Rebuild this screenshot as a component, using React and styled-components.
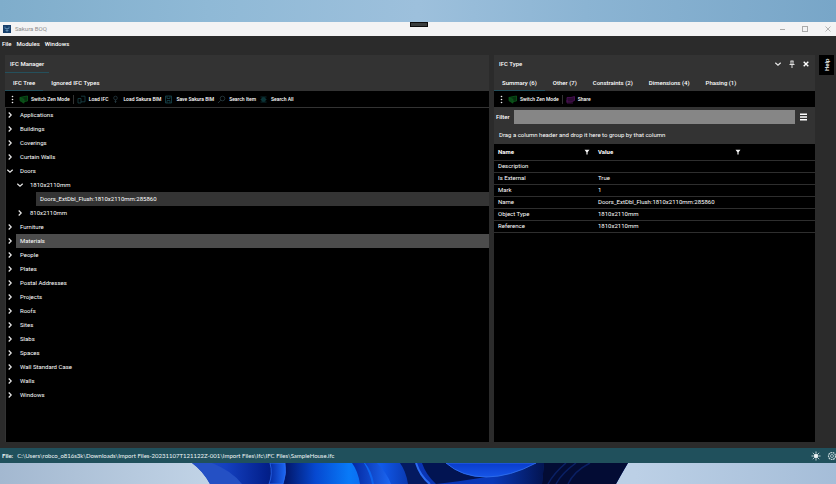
import React, { useState } from "react";
import styled, { createGlobalStyle, css } from "styled-components";

const GlobalStyle = createGlobalStyle`
  * {
    box-sizing: border-box;
  }

  body {
    margin: 0;
    background: #2b2b2b;
  }

  button, input, a {
    font: inherit;
    color: inherit;
  }

  button {
    margin: 0;
    padding: 0;
    border: 0;
    background: none;
  }
`;

const Desktop = styled.div`
  display: flex;
  flex-direction: column;
  min-height: 100vh;
  font-family: Roboto, "Open Sans", sans-serif;
  font-size: 6px;
  line-height: 8px;
  color: #fff;
  overflow: hidden;
`;

const Sky = styled.div`
  height: 22px;
  background: linear-gradient(90deg, #7fadcb 0%, #8fb9d6 25%, #9dc0dc 50%, #8bb4d3 70%, #78a6c8 100%);
`;

const TitleBar = styled.header`
  position: relative;
  display: flex;
  align-items: center;
  gap: 4px;
  height: 14px;
  padding: 0 4px 0 3px;
  background: #f3f3f4;
  color: #8c8c8c;

  h1 {
    flex: 1;
    margin: 0;
    font-size: 6px;
    font-weight: 400;
  }
`;

const DebugTab = styled.span`
  position: absolute;
  top: 0;
  left: 50%;
  width: 18px;
  height: 5px;
  margin-left: -8px;
  border: 1px solid #0c0c0c;
  background: #3a3d3d;
`;

const WindowButtons = styled.div`
  display: flex;
  gap: 15px;

  svg {
    display: block;
  }
`;

const MenuBar = styled.nav`
  display: flex;
  align-items: center;
  gap: 5px;
  height: 15px;
  padding: 0 2px;
  font-weight: 500;
`;

const Workspace = styled.main`
  display: flex;
  flex: 1;
  gap: 5px;
  padding: 4px 2px 6px 5px;
  background: #2b2b2b;
`;

const Panel = styled.section`
  display: flex;
  flex-direction: column;
  flex: ${(props) => props.$grow} 1 0;
  min-width: 0;
  background: #333;
`;

const PanelHeader = styled.div`
  display: flex;
  align-items: center;
  justify-content: space-between;
  height: 18px;
  padding-right: 5px;

  h2 {
    height: 18px;
    margin: 0;
    padding: 0 5px;
    font-size: 6px;
    font-weight: 500;
    line-height: 18px;
    border-bottom: 1px solid ${(props) => (props.$active ? "#25505c" : "transparent")};
  }
`;

const PanelButtons = styled.div`
  display: flex;
  gap: 7px;

  svg {
    display: block;
  }
`;

const Tabs = styled.div`
  display: flex;
  height: 18px;
`;

const Tab = styled.button`
  height: 18px;
  padding: 2px 8px 0;
  font-weight: 500;
  border-bottom: 1px solid ${(props) => (props.$active ? "#25505c" : "transparent")};
`;

const Toolbar = styled.div`
  display: flex;
  align-items: center;
  gap: 3px;
  height: 17px;
  padding: 0 4px;
  background: #000;
  border-bottom: 1px solid #333;
  white-space: nowrap;

  button {
    display: flex;
    align-items: center;
    gap: 3px;
    font-size: 5px;
    font-weight: 500;
  }

  svg {
    flex: none;
  }
`;

const Separator = styled.span`
  width: 1px;
  height: 9px;
  background: #333;
`;

const Tree = styled.ul`
  flex: 1;
  margin: 0 0 0 1px;
  padding: 0;
  background: #000;
  list-style: none;
`;

const TreeItem = styled.li`
  display: flex;
  height: 14px;
  padding-left: ${(props) => props.$level * 10}px;
`;

const Toggle = styled.button`
  display: flex;
  align-items: center;
  width: 10px;
`;

const TreeLabel = styled.span`
  flex: 1;
  padding-left: 4px;
  line-height: 14px;
  ${(props) =>
    props.$tone &&
    css`
      background: ${props.$tone};
    `}
`;

const FilterRow = styled.div`
  display: flex;
  align-items: center;
  gap: 4px;
  height: 18px;
  padding: 0 8px 0 2px;
  font-weight: 500;

  input {
    flex: 1;
    min-width: 0;
    height: 14px;
    padding: 0 3px;
    border: 0;
    border-radius: 0;
    background: #868686;
    outline: none;
  }

  button svg {
    display: block;
  }
`;

const GroupHint = styled.div`
  height: 18px;
  padding: 0 5px;
  line-height: 18px;
`;

const Grid = styled.div`
  flex: 1;
  background: #000;
`;

const Table = styled.table`
  width: 100%;
  table-layout: fixed;
  border-collapse: collapse;
  text-align: left;

  col:first-child {
    width: 100px;
  }

  col:nth-child(2) {
    width: 151px;
  }

  th,
  td {
    height: 12px;
    padding: 0 4px;
    border-bottom: 1px solid #2e2e2e;
    white-space: nowrap;
  }

  th {
    height: 16px;
    font-weight: 700;
  }
`;

const HeadCell = styled.div`
  display: flex;
  align-items: center;
  justify-content: space-between;
`;

const SideRail = styled.aside`
  margin-left: -1px;

  button {
    width: 15px;
    height: 20px;
    background: #000;
    font-weight: 500;
    writing-mode: vertical-rl;
    transform: rotate(180deg);
  }
`;

const StatusBar = styled.footer`
  display: flex;
  align-items: center;
  gap: 4px;
  height: 15px;
  padding: 0 0 0 2px;
  background: #20505c;
  color: #f0f6f7;
  font-family: Lato, Roboto, sans-serif;

  span {
    flex: 1;
  }

  button svg {
    display: block;
  }

  button + button {
    margin-left: 2px;
  }
`;

const Wallpaper = styled.div`
  height: 21px;
  background: linear-gradient(90deg, #a3b8d0 0%, #c1d3e6 25%, #bcd0e6 76%, #a5bdd8 100%);

  svg {
    display: block;
    width: 100%;
    height: 21px;
  }
`;

const Chevron = ({ open }) => (
  <svg width="8" height="8" viewBox="0 0 8 8" fill="none" stroke="#e8e8e8" strokeWidth="1.2">
    <path d={open ? "M1.3 2.8 4 5.2 6.7 2.8" : "M2.7 1.5 5.2 4 2.7 6.5"} />
  </svg>
);

const Dots = () => (
  <svg width="7" height="9" viewBox="0 0 7 9" fill="#f0f0f0">
    <circle cx="3.5" cy="1.5" r="0.8" />
    <circle cx="3.5" cy="4.5" r="0.8" />
    <circle cx="3.5" cy="7.5" r="0.8" />
  </svg>
);

const Funnel = () => (
  <svg width="6" height="6" viewBox="0 0 6 6" fill="#f4f4f4">
    <path d="M.5.8h5L3.6 3.2v2.3H2.4V3.2Z" />
  </svg>
);

const toolPaths = {
  zen: (
    <g stroke="#0a5a1b">
      <path d="M1 2.5 4 1.8 8.5 1v5L5 6.6Z" fill="#06300f" />
      <path d="M1 2.5v3.2L5 8.2V4.4Z" fill="#0a4a18" />
    </g>
  ),
  share: (
    <g stroke="#4f1259">
      <path d="M1 2.5h4L8.5 1.5v4L5 7H1Z" fill="#2c0a33" />
      <path d="M1 5v3h6" />
    </g>
  ),
  ifc: (
    <g stroke="#1a444a">
      <path d="M1 3.5h3V8H1ZM4 1.2h4v5.6H4" />
    </g>
  ),
  load: (
    <g stroke="#263a42">
      <circle cx="4.5" cy="3" r="1.8" />
      <path d="M4.5 4.8V8M3.5 6.5h2" />
    </g>
  ),
  save: (
    <g stroke="#17464f">
      <path d="M1.5 1h6v7h-6ZM3 1v2.5h3V1M3 8V5.5h3V8" />
    </g>
  ),
  search: (
    <g stroke="#2b3d42">
      <circle cx="5.5" cy="3.5" r="2.3" />
      <path d="M3.8 5.2 1 8" />
    </g>
  ),
  all: (
    <g stroke="#0e393c">
      <path d="M1.5 2h6M1.5 4.5h6M1.5 7h6" />
      <circle cx="4.5" cy="4.5" r="2" fill="#0b3437" />
    </g>
  ),
};

const Tool = ({ icon, children }) => (
  <button type="button">
    <svg width="9" height="9" viewBox="0 0 9 9" fill="none" strokeWidth="0.8">
      {toolPaths[icon]}
    </svg>
    {children}
  </button>
);

const treeRows = [
  { label: "Applications" },
  { label: "Buildings" },
  { label: "Coverings" },
  { label: "Curtain Walls" },
  { label: "Doors", open: true },
  { label: "1810x2110mm", level: 1, open: true },
  { label: "Doors_ExtDbl_Flush:1810x2110mm:285860", level: 2, leaf: true, tone: "#343434" },
  { label: "810x2110mm", level: 1 },
  { label: "Furniture" },
  { label: "Materials", tone: "#4c4c4c" },
  { label: "People" },
  { label: "Plates" },
  { label: "Postal Addresses" },
  { label: "Projects" },
  { label: "Roofs" },
  { label: "Sites" },
  { label: "Slabs" },
  { label: "Spaces" },
  { label: "Wall Standard Case" },
  { label: "Walls" },
  { label: "Windows" },
];

const properties = [
  ["Description", ""],
  ["Is External", "True"],
  ["Mark", "1"],
  ["Name", "Doors_ExtDbl_Flush:1810x2110mm:285860"],
  ["Object Type", "1810x2110mm"],
  ["Reference", "1810x2110mm"],
];

const typeTabs = ["Summary (6)", "Other (7)", "Constraints (2)", "Dimensions (4)", "Phasing (1)"];

function ManagerPanel() {
  return (
    <Panel $grow={484}>
      <PanelHeader $active>
        <h2>IFC Manager</h2>
      </PanelHeader>
      <Tabs>
        <Tab $active>IFC Tree</Tab>
        <Tab>Ignored IFC Types</Tab>
      </Tabs>
      <Toolbar>
        <Dots />
        <Tool icon="zen">Switch Zen Mode</Tool>
        <Separator />
        <Tool icon="ifc">Load IFC</Tool>
        <Tool icon="load">Load Sakura BIM</Tool>
        <Tool icon="save">Save Sakura BIM</Tool>
        <Tool icon="search">Search Item</Tool>
        <Tool icon="all">Search All</Tool>
      </Toolbar>
      <Tree>
        {treeRows.map((row) => (
          <TreeItem key={row.label} $level={row.level || 0}>
            <Toggle type="button" aria-label={`Toggle ${row.label}`}>
              {!row.leaf && <Chevron open={row.open} />}
            </Toggle>
            <TreeLabel $tone={row.tone}>{row.label}</TreeLabel>
          </TreeItem>
        ))}
      </Tree>
    </Panel>
  );
}

function TypePanel() {
  const [filter, setFilter] = useState("");

  return (
    <Panel $grow={321}>
      <PanelHeader>
        <h2>IFC Type</h2>
        <PanelButtons>
          <button type="button" aria-label="Window position">
            <Chevron open />
          </button>
          <button type="button" aria-label="Pin">
            <svg width="6" height="8" viewBox="0 0 6 8" fill="none" stroke="#f0f0f0" strokeWidth="0.9">
              <path d="M1.5 1h3M2 1v3.5M4 1v3.5M.5 4.5h5M3 4.5V8" />
            </svg>
          </button>
          <button type="button" aria-label="Close">
            <svg width="8" height="8" viewBox="0 0 8 8" stroke="#fff" strokeWidth="1.4">
              <path d="m1.7 1.7 4.6 4.6M6.3 1.7 1.7 6.3" />
            </svg>
          </button>
        </PanelButtons>
      </PanelHeader>
      <Tabs>
        {typeTabs.map((tab, i) => (
          <Tab key={tab} $active={i === 0}>
            {tab}
          </Tab>
        ))}
      </Tabs>
      <Toolbar>
        <Dots />
        <Tool icon="zen">Switch Zen Mode</Tool>
        <Separator />
        <Tool icon="share">Share</Tool>
      </Toolbar>
      <FilterRow>
        <label htmlFor="filter">Filter</label>
        <input id="filter" value={filter} onChange={(e) => setFilter(e.target.value)} />
        <button type="button" aria-label="Grid menu">
          <svg width="8" height="8" viewBox="0 0 8 8" stroke="#fff" strokeWidth="1.4">
            <path d="M1 1.3h7M1 4h7M1 6.7h7" />
          </svg>
        </button>
      </FilterRow>
      <GroupHint>Drag a column header and drop it here to group by that column</GroupHint>
      <Grid>
        <Table>
          <colgroup>
            <col />
            <col />
            <col />
          </colgroup>
          <thead>
            <tr>
              <th>
                <HeadCell>
                  Name <Funnel />
                </HeadCell>
              </th>
              <th>
                <HeadCell>
                  Value <Funnel />
                </HeadCell>
              </th>
              <th />
            </tr>
          </thead>
          <tbody>
            {properties.map(([name, value]) => (
              <tr key={name}>
                <td>{name}</td>
                <td>{value}</td>
                <td />
              </tr>
            ))}
          </tbody>
        </Table>
      </Grid>
    </Panel>
  );
}

export default function App() {
  return (
    <Desktop>
      <GlobalStyle />
      <Sky />
      <TitleBar>
        <svg width="8" height="8" viewBox="0 0 8 8">
          <rect width="8" height="8" fill="#173f6b" />
          <path d="M2 1.5v2h4v-2M4 3.5V7M2.5 5.5h3" stroke="#6f9cc2" strokeWidth="0.7" fill="none" />
        </svg>
        <h1>Sakura BOQ</h1>
        <DebugTab />
        <WindowButtons>
          <button type="button" aria-label="Minimize">
            <svg width="8" height="8" viewBox="0 0 8 8" stroke="#aaa">
              <path d="M2 4.5h5" />
            </svg>
          </button>
          <button type="button" aria-label="Maximize">
            <svg width="8" height="8" viewBox="0 0 8 8" stroke="#aaa" fill="none">
              <rect x="1.5" y="1.5" width="5" height="5" />
            </svg>
          </button>
          <button type="button" aria-label="Close window">
            <svg width="8" height="8" viewBox="0 0 8 8" stroke="#aaa" strokeWidth="0.9">
              <path d="m1.5 1.5 5 5M6.5 1.5l-5 5" />
            </svg>
          </button>
        </WindowButtons>
      </TitleBar>
      <MenuBar>
        <button type="button">File</button>
        <button type="button">Modules</button>
        <button type="button">Windows</button>
      </MenuBar>
      <Workspace>
        <ManagerPanel />
        <TypePanel />
        <SideRail>
          <button type="button">Help</button>
        </SideRail>
      </Workspace>
      <StatusBar>
        <b>File:</b>
        <span>C:\Users\robco_o816s3k\Downloads\Import Files-20231107T121122Z-001\Import Files\Ifc\IFC Files\SampleHouse.ifc</span>
        <button type="button" aria-label="Theme">
          <svg width="10" height="10" viewBox="0 0 10 10" stroke="#eef4f5" strokeWidth="0.8">
            <circle cx="5" cy="5" r="2" fill="#eef4f5" />
            <path d="M5 .5v1.6M5 7.9v1.6M.5 5h1.6M7.9 5h1.6M1.8 1.8l1.1 1.1M7.1 7.1l1.1 1.1M8.2 1.8 7.1 2.9M2.9 7.1 1.8 8.2" />
          </svg>
        </button>
        <button type="button" aria-label="Settings">
          <svg width="9" height="10" viewBox="0 0 9 10" stroke="#c4d6da" fill="none">
            <circle cx="5" cy="5" r="3.5" strokeDasharray="1.8 0.6" strokeWidth="1.2" />
            <circle cx="5" cy="5" r="1.5" strokeWidth="0.8" />
          </svg>
        </button>
      </StatusBar>
      <Wallpaper>
        <svg viewBox="0 0 836 21" preserveAspectRatio="none">
          <defs>
            <linearGradient id="bloom" gradientUnits="userSpaceOnUse" x1="192" x2="416" y1="0" y2="0">
              <stop offset="0" stopColor="#2450c4" />
              <stop offset="0.15" stopColor="#1440c0" />
              <stop offset="0.33" stopColor="#03208c" />
              <stop offset="0.42" stopColor="#02186c" />
              <stop offset="0.55" stopColor="#0648d0" />
              <stop offset="0.7" stopColor="#087af8" />
              <stop offset="0.85" stopColor="#1058e8" />
              <stop offset="1" stopColor="#0830a0" />
            </linearGradient>
            <linearGradient id="stripe">
              <stop offset="0" stopColor="#0428a0" />
              <stop offset="1" stopColor="#1c68f4" />
            </linearGradient>
            <linearGradient id="petal" x1="0" x2="0" y1="0" y2="1">
              <stop offset="0" stopColor="#0a3ccc" />
              <stop offset="1" stopColor="#1656e8" />
            </linearGradient>
            <linearGradient id="well">
              <stop offset="0" stopColor="#0a34b4" />
              <stop offset="0.6" stopColor="#0838b8" />
              <stop offset="1" stopColor="#031450" />
            </linearGradient>
          </defs>
          <path d="M192 0h436q-6 10-12 21H210Q203 8 192 0Z" fill="url(#bloom)" />
          <path d="M192 0h20q20 8 30 21h-32Q203 8 192 0Z" fill="#2450c4" />
          <path d="M270 0h15q2 10-2 21h-14q4-10 1-21Z" fill="url(#stripe)" stroke="#2c6cf0" strokeWidth="0.8" />
          <path d="M352 0h12q6 10 8 21h-12Q358 8 352 0ZM365 0h12q10 10 14 21h-17Q372 8 365 0Z" fill="url(#stripe)" />
          <path d="M400 0h17q2 12 14 21h-23Q406 8 400 0Z" fill="#041a60" />
          <path d="M416 0h128q-1 12-2 21H428q-8-8-12-21Z" fill="url(#well)" />
          <path d="M422 0h24q16 14 40 14-30 5-50 7Q426 12 422 0Z" fill="#021452" />
          <path d="M446 0h90q-26 14-50 14T446 0Z" fill="url(#petal)" stroke="#3474f0" strokeWidth="0.8" />
          <path d="M416 0q4 13 14 21" stroke="#2c6cf0" strokeWidth="2" fill="none" />
          <path d="M544 0h84q-6 10-12 21h-74Z" fill="#030c34" />
          <path d="M566 0q-12 10-18 21M576 0q-14 10-20 21M590 0q-16 8-22 21" stroke="#0a2064" strokeWidth="1.5" fill="none" />
        </svg>
      </Wallpaper>
    </Desktop>
  );
}
